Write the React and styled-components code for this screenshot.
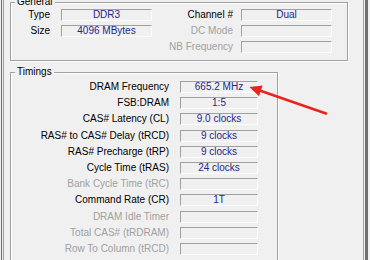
import React from 'react';
import styled, { createGlobalStyle } from 'styled-components';

const GENERAL = [
  { left: 'Type', leftValue: 'DDR3', right: 'Channel #', rightValue: 'Dual' },
  { left: 'Size', leftValue: '4096 MBytes', right: 'DC Mode', rightDisabled: true },
  { right: 'NB Frequency', rightDisabled: true },
];

const TIMINGS = [
  { label: 'DRAM Frequency', value: '665.2 MHz' },
  { label: 'FSB:DRAM', value: '1:5' },
  { label: 'CAS# Latency (CL)', value: '9.0 clocks' },
  { label: 'RAS# to CAS# Delay (tRCD)', value: '9 clocks' },
  { label: 'RAS# Precharge (tRP)', value: '9 clocks' },
  { label: 'Cycle Time (tRAS)', value: '24 clocks' },
  { label: 'Bank Cycle Time (tRC)', disabled: true },
  { label: 'Command Rate (CR)', value: '1T' },
  { label: 'DRAM Idle Timer', disabled: true },
  { label: 'Total CAS# (tRDRAM)', disabled: true },
  { label: 'Row To Column (tRCD)', disabled: true },
];

export default function App() {
  return (
    <>
      <GlobalStyle />
      <Window>
        <Panel>
          <GroupBox $width={338} $top={-4} $padTop={1} $padBottom={7}>
            <Legend>General</Legend>
            <GeneralGrid>
              {GENERAL.map((row, index) => (
                <React.Fragment key={index}>
                  {row.left ? <Label $gap={11}>{row.left}</Label> : <span />}
                  {row.left ? <Field>{row.leftValue}</Field> : <span />}
                  <Label $gap={8} $disabled={row.rightDisabled}>
                    {row.right}
                  </Label>
                  <Field>{row.rightValue}</Field>
                </React.Fragment>
              ))}
            </GeneralGrid>
          </GroupBox>
          <GroupBox $width={268} $top={5} $padTop={3} $padBottom={30}>
            <Legend>Timings</Legend>
            <TimingsGrid>
              {TIMINGS.map(({ label, value, disabled }) => (
                <React.Fragment key={label}>
                  <Label $gap={11} $disabled={disabled}>
                    {label}
                  </Label>
                  <Field>{value}</Field>
                </React.Fragment>
              ))}
            </TimingsGrid>
          </GroupBox>
        </Panel>
      </Window>
      <Arrow viewBox="0 0 370 260" width="370" height="260">
        <line
          x1="326"
          y1="113.5"
          x2="259"
          y2="90.3"
          stroke="#e8241f"
          strokeWidth="2.6"
          strokeLinecap="round"
        />
        <polygon points="249.5,87 262.6,85.4 259,96.2" fill="#e8241f" />
      </Arrow>
    </>
  );
}

const GlobalStyle = createGlobalStyle`
  html, body {
    margin: 0;
    padding: 0;
    background: #f0f0f0;
    overflow: hidden;
  }

  body {
    font-family: "Liberation Sans", Arial, sans-serif;
    font-size: 10px;
  }
`;

const Window = styled.div`
  box-sizing: border-box;
  margin-left: 1px;
  width: 367px;
  height: 260px;
  border-left: 1px solid #6b6b6b;
  border-right: 3px solid #707070;
  overflow: hidden;
`;

const Panel = styled.div`
  box-sizing: border-box;
  margin: 0 1px;
  min-height: 280px;
  padding-left: 6px;
  border-left: 1px solid #a0a0a0;
  border-right: 1px solid #a0a0a0;
`;

const GroupBox = styled.fieldset`
  box-sizing: border-box;
  width: ${({ $width }) => $width}px;
  min-width: 0;
  margin: ${({ $top }) => $top}px 0 0;
  padding: ${({ $padTop }) => $padTop}px 0 ${({ $padBottom }) => $padBottom}px;
  border: 1px solid #a0a0a0;
  box-shadow: 1px 1px 0 #fff, inset 1px 1px 0 #fff;
`;

const Legend = styled.legend`
  margin-left: 4px;
  padding: 0 2px;
  background: #f0f0f0;
  color: #000;
  font-size: 10px;
  line-height: 12px;
`;

const GeneralGrid = styled.div`
  display: grid;
  grid-template-columns: 50px 91px 89px 91px;
  grid-auto-rows: 12px;
  row-gap: 4px;
  align-items: center;
`;

const TimingsGrid = styled.div`
  display: grid;
  grid-template-columns: 169px 78px;
  grid-auto-rows: 12px;
  row-gap: 4.2px;
  align-items: center;
`;

const Label = styled.div`
  padding-right: ${({ $gap }) => $gap}px;
  color: ${({ $disabled }) => ($disabled ? '#a0a0a0' : '#000')};
  text-align: right;
  white-space: nowrap;
  line-height: 12px;
`;

const Field = styled.div`
  box-sizing: border-box;
  height: 12px;
  border-top: 1px solid #a0a0a0;
  border-left: 1px solid #a0a0a0;
  border-bottom: 1px solid #fff;
  border-right: 1px solid #fff;
  background: #f0f0f0;
  color: #26268a;
  text-align: center;
  white-space: nowrap;
  line-height: 10px;
`;

const Arrow = styled.svg`
  position: absolute;
  top: 0;
  left: 0;
  pointer-events: none;
`;
